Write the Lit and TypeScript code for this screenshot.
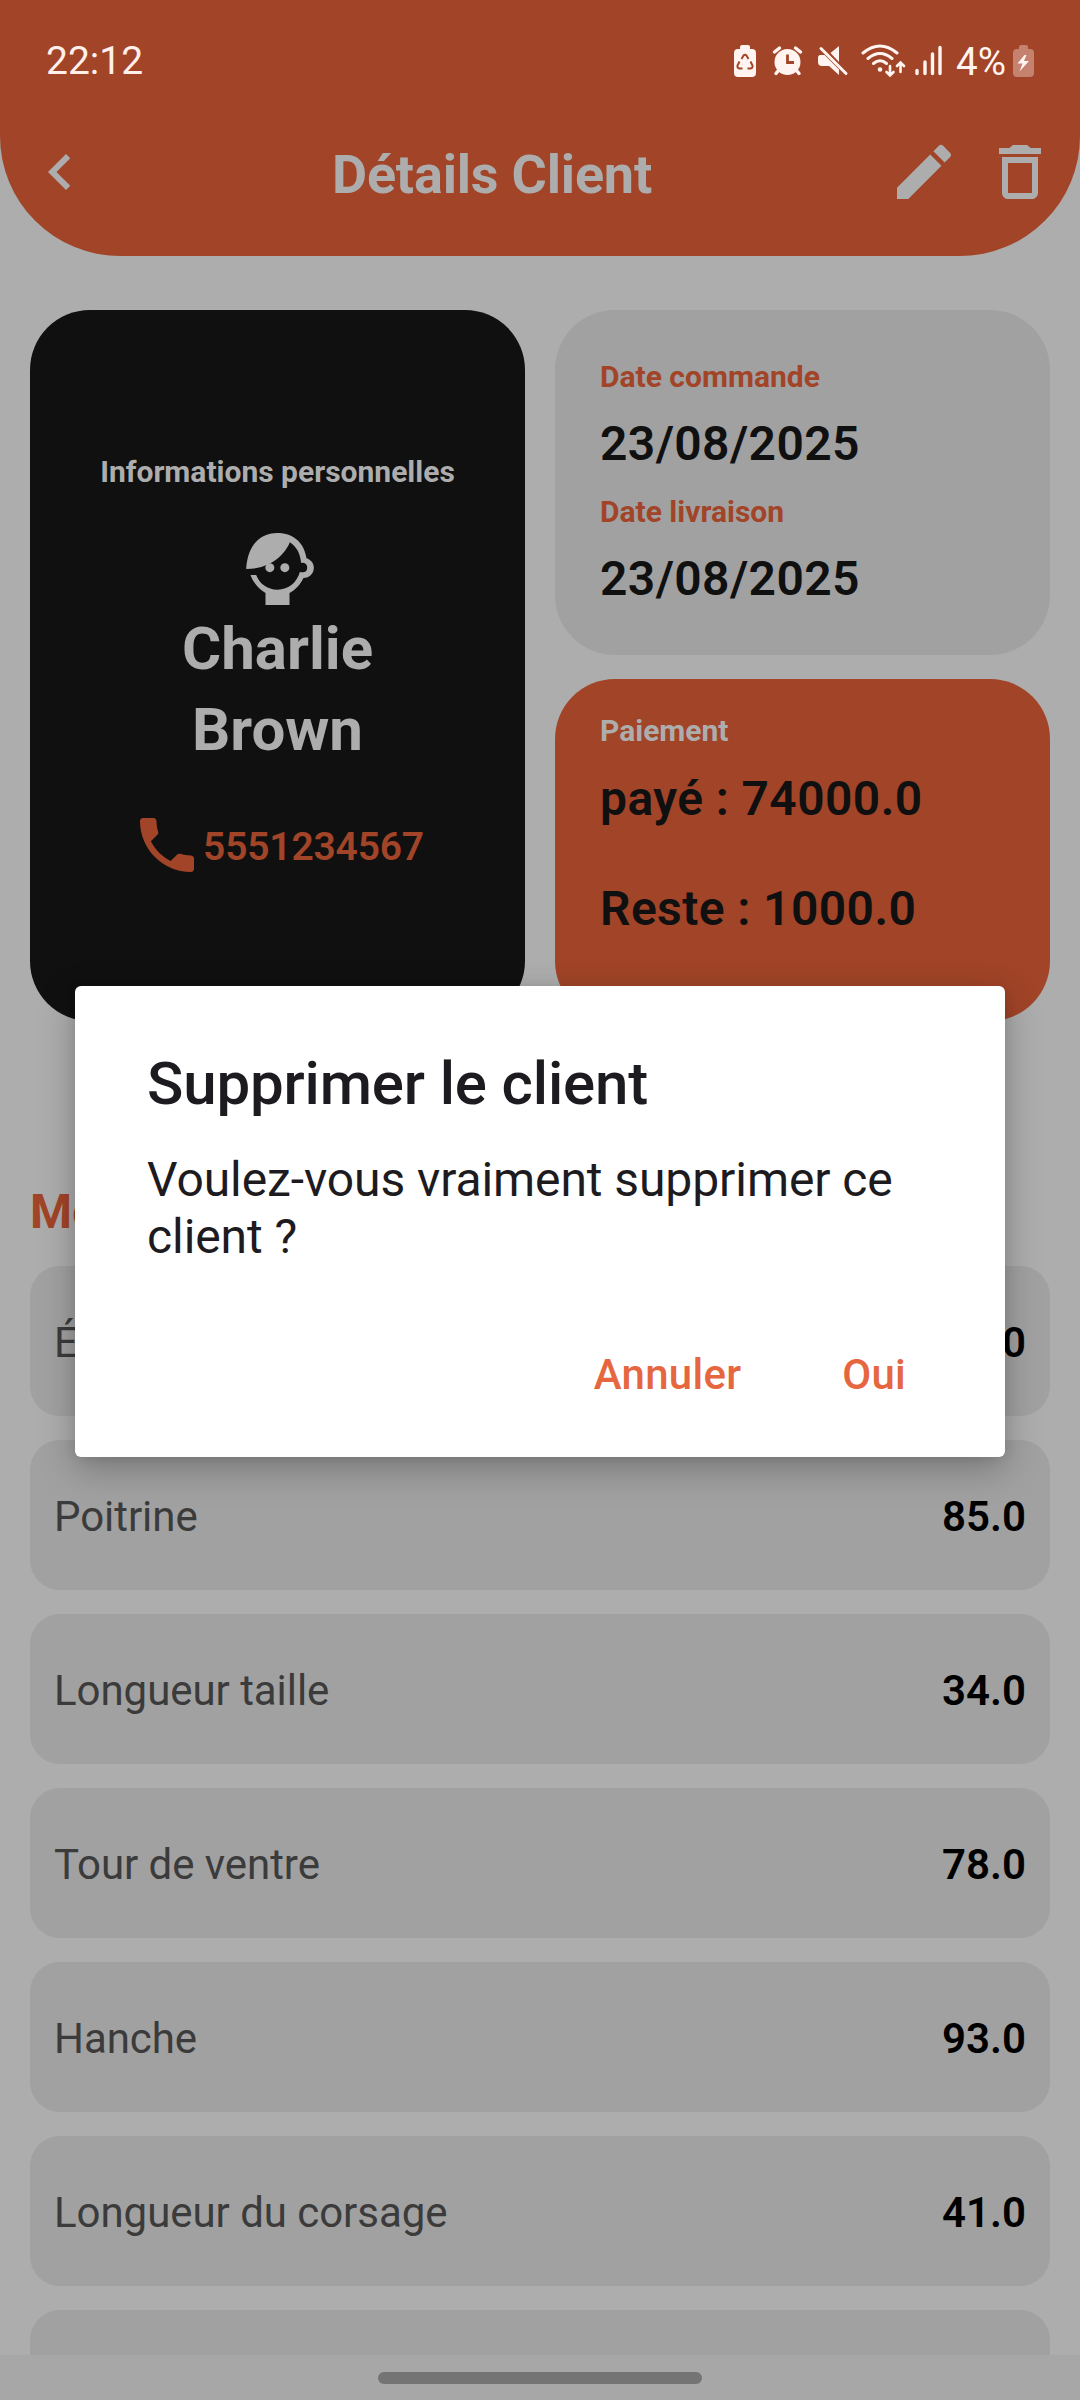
import { LitElement, html, css, svg } from "lit";
import { customElement } from "lit/decorators.js";

const measures: [string, string][] = [
  ["Épaule", "40.0"],
  ["Poitrine", "85.0"],
  ["Longueur taille", "34.0"],
  ["Tour de ventre", "78.0"],
  ["Hanche", "93.0"],
  ["Longueur du corsage", "41.0"],
];

const icon = (d: string, cls = "") =>
  html`<svg class="icon ${cls}" viewBox="0 0 24 24">${svg`<path d=${d}></path>`}</svg>`;

const BACK = "M15.41 7.41 14 6l-6 6 6 6 1.41-1.41L10.83 12z";
const EDIT =
  "M3 17.25V21h3.75L17.81 9.94l-3.75-3.75L3 17.25zM20.71 7.04c.39-.39.39-1.02 0-1.41l-2.34-2.34a.9959.9959 0 0 0-1.41 0l-1.83 1.83 3.75 3.75 1.83-1.83z";
const TRASH =
  "M6 19c0 1.1.9 2 2 2h8c1.1 0 2-.9 2-2V7H6v12zM8 9h8v10H8V9zm7.5-5-.7-.7c-.2-.2-.4-.3-.7-.3H9.900c-.3 0-.5.1-.7.3L8.500 4H5v2h14V4z";
const PHONE =
  "M20 15.5c-1.250 0-2.450-.2-3.570-.570-.350-.110-.740-.030-1.020.240l-2.200 2.200c-2.830-1.440-5.150-3.750-6.590-6.590l2.200-2.210c.280-.260.360-.650.250-1C8.700 6.450 8.500 5.250 8.500 4c0-.550-.450-1-1-1H4c-.550 0-1 .450-1 1 0 9.390 7.610 17 17 17 .550 0 1-.450 1-1v-3.500c0-.550-.450-1-1-1z";

@customElement("app-root")
export class AppRoot extends LitElement {
  static styles = css`
    :host {
      display: block;
      position: relative;
      width: 1080px;
      height: 2400px;
      overflow: hidden;
      background: #adadad;
      font-family: Roboto, "Liberation Sans", sans-serif;
    }
    * { box-sizing: border-box; }
    svg { display: block; flex: none; }
    .icon { width: 72px; height: 72px; fill: currentColor; }
    .screen { display: flex; flex-direction: column; height: 2400px; }
    .header {
      flex: none;
      height: 256px;
      background: #a14428;
      border-radius: 0 0 120px 120px;
      color: #adadad;
      display: flex;
      flex-direction: column;
    }
    .status {
      height: 122px;
      padding: 0 45px 0 46px;
      display: flex;
      align-items: center;
      justify-content: space-between;
      color: #fff0eb;
      font-size: 39px;
      line-height: 46px;
    }
    .bar {
      height: 100px;
      padding: 0 24px;
      display: grid;
      grid-template-columns: 72px 1fr auto;
      align-items: center;
    }
    .title {
      font-size: 54px;
      line-height: 64px;
      font-weight: 700;
      letter-spacing: -0.2px;
      padding-left: 236px;
      padding-top: 5px;
    }
    .actions { display: flex; gap: 24px; }
    .cards {
      flex: none;
      padding: 54px 30px 0;
      display: grid;
      grid-template-columns: 495px 495px;
      gap: 30px;
      height: 765px;
    }
    .person {
      background: #101010;
      border-radius: 60px;
      color: #adadad;
      display: flex;
      flex-direction: column;
      align-items: center;
      padding-top: 144px;
    }
    .small { font-size: 30px; line-height: 35px; font-weight: 700; }
    .face { width: 90px; height: 90px; margin-top: 36px; }
    .name {
      font-size: 60px;
      line-height: 81px;
      font-weight: 700;
      text-align: center;
      width: 240px;
      margin-top: -7px;
    }
    .tel {
      display: flex;
      align-items: center;
      color: #a14428;
      font-size: 39px;
      letter-spacing: -0.2px;
      font-weight: 600;
      margin-top: 39px;
    }
    .tel span { padding-top: 3px; }
    .right { display: flex; flex-direction: column; gap: 24px; }
    .dates, .pay {
      border-radius: 60px;
      padding-left: 45px;
      display: flex;
      flex-direction: column;
    }
    .dates { height: 345px; background: #a1a1a1; padding-top: 49px; gap: 22px; }
    .pay { height: 342px; background: #a14428; padding-top: 34px; color: #adadad; gap: 23px; }
    .orange { color: #a14428; }
    .big {
      font-size: 48px;
      line-height: 56px;
      font-weight: 600;
      letter-spacing: 0.4px;
      color: #101010;
    }
    .rest { margin-top: 31px; }
    .section {
      flex: none;
      color: #a14428;
      font-size: 48px;
      line-height: 56px;
      font-weight: 700;
      padding: 163px 30px 0;
      height: 245px;
    }
    .list { padding: 0 30px; display: flex; flex-direction: column; gap: 24px; flex: 1; overflow: hidden; }
    .row {
      flex: none;
      height: 150px;
      border-radius: 30px;
      background: #a1a1a1;
      padding: 2px 24px 0;
      display: flex;
      align-items: center;
      justify-content: space-between;
      font-size: 42px;
      color: #3b3b3b;
    }
    .row span { letter-spacing: -0.05px; }
    .row .val { color: #000; font-weight: 600; letter-spacing: 0; }
    .nav {
      flex: none;
      height: 45px;
      background: #a7a7a7;
      display: flex;
      justify-content: center;
      padding-top: 17px;
    }
    .handle { width: 324px; height: 12px; border-radius: 6px; background: #747474; }
    .dialog {
      position: absolute;
      left: 75px;
      top: 986px;
      width: 930px;
      height: 471px;
      background: #fff;
      border-radius: 6px;
      box-shadow: 0 12px 36px rgba(0, 0, 0, 0.26), 0 2px 12px rgba(0, 0, 0, 0.08);
      padding: 62px 72px 0;
      color: #1d1b20;
    }
    .dtitle { font-size: 60px; line-height: 72px; font-weight: 500; letter-spacing: -0.15px; }
    .dbody { font-size: 48px; line-height: 57px; margin-top: 31px; letter-spacing: -0.08px; }
    .dact {
      display: flex;
      justify-content: flex-end;
      gap: 101px;
      font-size: 42px;
      line-height: 50px;
      font-weight: 500;
      letter-spacing: 0.25px;
      color: #e6673f;
      margin-top: 85px;
      padding-right: 27px;
    }
  `;

  private statusIcons() {
    return html`<svg width="302" height="46" viewBox="733 38 302 46">
      <g fill="#fff4f0">
        <path d="M740 49v-2q0-2 2-2h6q2 0 2 2v2h2q4 0 4 4v20q0 4-4 4h-14q-4 0-4-4v-20q0-4 4-4z"></path>
        <g fill="none" stroke="#a14428" stroke-width="2">
          <path d="M741.500 59l2-3.500q1.500-1.500 3 0l2 3.500M750.500 61.500l2 4q.5 2.500-2 3h-3M742.500 68.500h-3q-2.500-.5-2-3l2-4"></path>
        </g>
        <circle cx="787.500" cy="62" r="13"></circle>
        <path d="M774.500 52l5-4M800.500 52l-5-4M778 71l-2 2.500M797 71l2 2.500" stroke="#fff4f0" stroke-width="3.500" stroke-linecap="round"></path>
        <path d="M787.500 54.500v8h6.500" fill="none" stroke="#a14428" stroke-width="2.800"></path>
        <path d="M818 57.500q0-2.500 2.500-2.500h4l14.500 14.500v5.500l-10-9h-7q-4 0-4-4zM830.500 53l8.500-7v16z"></path>
        <path d="M821 48.500l25 25" stroke="#fff4f0" stroke-width="3" stroke-linecap="round"></path>
        <g fill="none" stroke="#fff4f0" stroke-width="3" stroke-linecap="round">
          <path d="M863 53q17-14 34 0M868 58.500q12-10 24 0M873.500 63.500q6.500-5.500 13 0"></path>
          <path d="M890 66v9M886.500 72l3.500 3.500 3.500-3.500M900.500 72v-9M897 66l3.500-3.500 3.500 3.500" stroke-width="2.600"></path>
        </g>
        <circle cx="880" cy="69.500" r="2.300"></circle>
        <path d="M917 70.500v3M925 62v11.500M932.500 54v19.500M940 47.500v26" stroke="#fff4f0" stroke-width="3.400" stroke-linecap="round"></path>
        <text x="956" y="75" font-size="39" textLength="50" lengthAdjust="spacingAndGlyphs">4%</text>
        <path fill="#c4826f" d="M1019 49v-2q0-2 2-2h5q2 0 2 2v2h2q4 0 4 4v20q0 4-4 4h-13q-4 0-4-4v-20q0-4 4-4z"></path>
        <path d="M1024.500 55l-7 8.500h5l-3 8 9.500-10.500h-5l2.500-6z"></path>
      </g>
    </svg>`;
  }

  render() {
    return html`
      <div class="screen">
        <div class="header">
          <div class="status"><span>22:12</span>${this.statusIcons()}</div>
          <div class="bar">
            ${icon(BACK)}
            <div class="title">Détails Client</div>
            <div class="actions">${icon(EDIT)}${icon(TRASH)}</div>
          </div>
        </div>
        <div class="cards">
          <div class="person">
            <div class="small">Informations personnelles</div>
            <svg class="face" viewBox="-7.500 0 270 270" fill="#adadad">
              <path d="M32 132C36 65 70 24 125 24C175 24 207 55 213 100C226 104 235 115 235 128C235 145 222 159 204 159C195 178 180 195 162 204V240H90V204C70 193 54 174 45 150H62C72 176 95 194 126 194C160 194 184 172 193 141Q200 143 207 141Q215 138 215 128Q215 117 206 114Q202 113 197 114C194 85 183 65 163 52C150 85 110 132 32 132Z"></path>
              <circle cx="103" cy="128" r="13.500"></circle>
              <circle cx="148" cy="128" r="13.500"></circle>
            </svg>
            <div class="name">Charlie Brown</div>
            <div class="tel">${icon(PHONE)}<span>5551234567</span></div>
          </div>
          <div class="right">
            <div class="dates">
              <div class="small orange">Date commande</div>
              <div class="big">23/08/2025</div>
              <div class="small orange">Date livraison</div>
              <div class="big">23/08/2025</div>
            </div>
            <div class="pay">
              <div class="small">Paiement</div>
              <div class="big">payé : 74000.0</div>
              <div class="big rest">Reste : 1000.0</div>
            </div>
          </div>
        </div>
        <div class="section">Mesures</div>
        <div class="list">
          ${measures.map(([k, v]) => html`<div class="row"><span>${k}</span><span class="val">${v}</span></div>`)}
          <div class="row"></div>
        </div>
        <div class="nav"><div class="handle"></div></div>
      </div>
      <div class="dialog">
        <div class="dtitle">Supprimer le client</div>
        <div class="dbody">Voulez-vous vraiment supprimer ce client ?</div>
        <div class="dact"><span>Annuler</span><span>Oui</span></div>
      </div>
    `;
  }
}
